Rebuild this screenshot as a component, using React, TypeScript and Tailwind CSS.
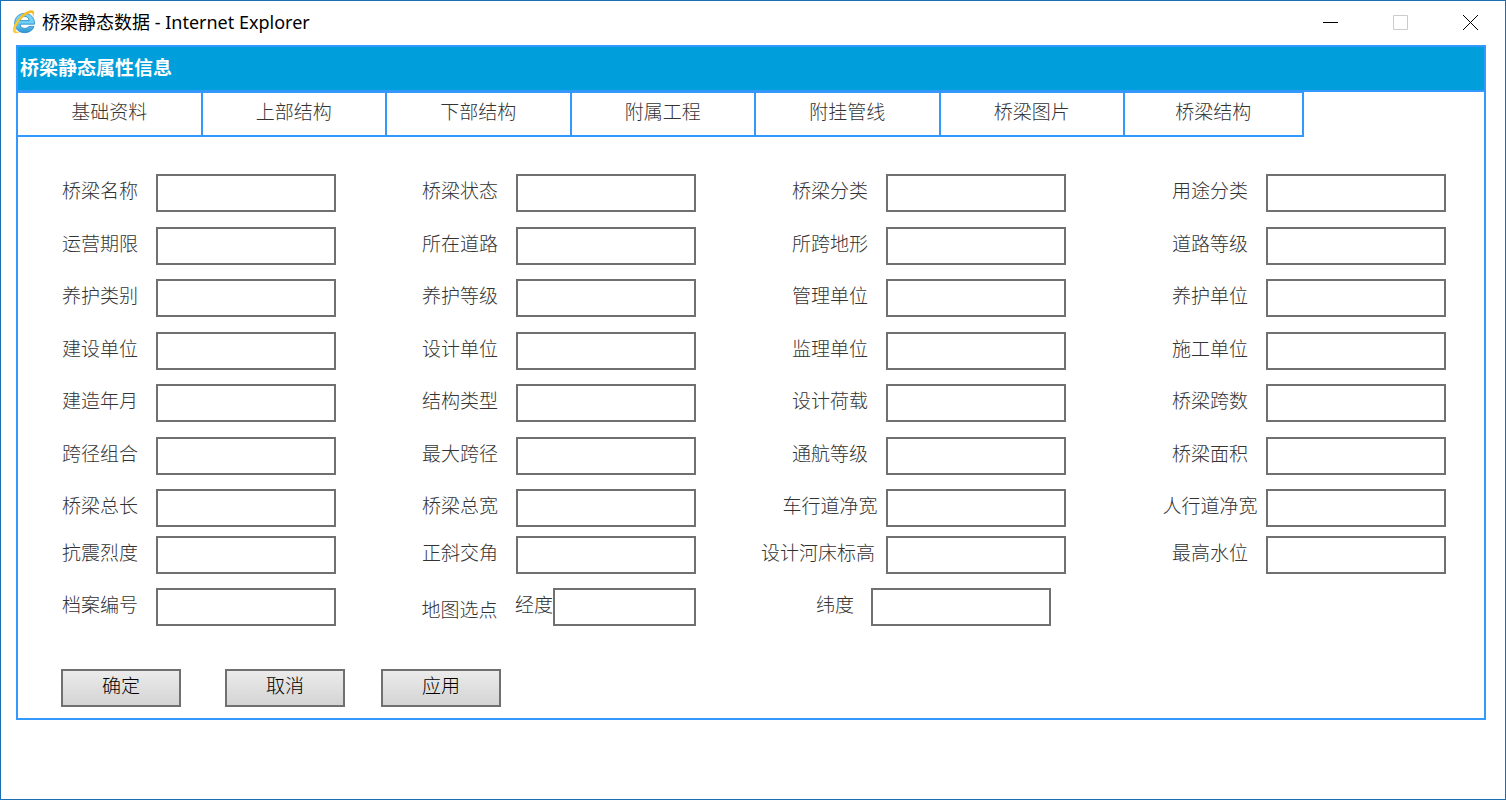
import { useState } from "react";
import clsx from "clsx";

type FieldDef = {
  name: string;
  label: string;
  labelClass?: string;
};

const TABS = ["基础资料", "上部结构", "下部结构", "附属工程", "附挂管线", "桥梁图片", "桥梁结构"];

const ROWS: FieldDef[][] = [
  [
    { name: "bridge_name", label: "桥梁名称" },
    { name: "bridge_status", label: "桥梁状态" },
    { name: "bridge_category", label: "桥梁分类" },
    { name: "usage_category", label: "用途分类" },
  ],
  [
    { name: "operation_period", label: "运营期限" },
    { name: "road", label: "所在道路" },
    { name: "terrain", label: "所跨地形" },
    { name: "road_grade", label: "道路等级" },
  ],
  [
    { name: "maintenance_type", label: "养护类别" },
    { name: "maintenance_grade", label: "养护等级" },
    { name: "management_unit", label: "管理单位" },
    { name: "maintenance_unit", label: "养护单位" },
  ],
  [
    { name: "owner_unit", label: "建设单位" },
    { name: "design_unit", label: "设计单位" },
    { name: "supervision_unit", label: "监理单位" },
    { name: "construction_unit", label: "施工单位" },
  ],
  [
    { name: "built_at", label: "建造年月" },
    { name: "structure_type", label: "结构类型" },
    { name: "design_load", label: "设计荷载" },
    { name: "span_count", label: "桥梁跨数" },
  ],
  [
    { name: "span_combination", label: "跨径组合" },
    { name: "max_span", label: "最大跨径" },
    { name: "navigation_grade", label: "通航等级" },
    { name: "bridge_area", label: "桥梁面积" },
  ],
  [
    { name: "total_length", label: "桥梁总长" },
    { name: "total_width", label: "桥梁总宽" },
    { name: "carriageway_width", label: "车行道净宽" },
    { name: "sidewalk_width", label: "人行道净宽" },
  ],
];

const SEISMIC_ROW: FieldDef[] = [
  { name: "seismic_intensity", label: "抗震烈度" },
  { name: "skew_angle", label: "正斜交角" },
  { name: "riverbed_elevation", label: "设计河床标高", labelClass: "-ml-6 w-[136px]" },
  { name: "highest_water_level", label: "最高水位" },
];

export default function App() {
  return (
    <div className="flex min-h-screen flex-col border border-[#1a6fb4] bg-white">
      <TitleBar />
      <main className="mr-[19px] ml-[15px] border-2 border-[#3399ff] font-['Noto_Sans_CJK_SC',sans-serif] text-[19px] leading-7 font-light text-[#333]">
        <h1 className="flex h-[45px] items-center border-b-2 border-[#3399ff] bg-[#009edb] px-0.5 pb-1 font-bold text-white">
          桥梁静态属性信息
        </h1>
        <TabStrip />
        <BridgeForm />
      </main>
    </div>
  );
}

function TitleBar() {
  return (
    <header className="flex h-11 items-center pb-0.5 pl-[11px] text-black">
      <IeLogo />
      <span className="ml-1.5 font-['Noto_Sans','Noto_Sans_CJK_SC',sans-serif] text-[18px] leading-6">
        桥梁静态数据 - Internet Explorer
      </span>
      <div className="ml-auto flex">
        <WindowButton label="最小化">
          <path d="M0 7.5h15" />
        </WindowButton>
        <WindowButton label="最大化" disabled>
          <path d="M.5.5h14v14H.5z" />
        </WindowButton>
        <WindowButton label="关闭">
          <path d="M0 0l15 15M15 0L0 15" />
        </WindowButton>
      </div>
    </header>
  );
}

function WindowButton({
  label,
  disabled,
  children,
}: {
  label: string;
  disabled?: boolean;
  children: React.ReactNode;
}) {
  return (
    <button
      type="button"
      aria-label={label}
      disabled={disabled}
      className="flex h-10 w-[70px] items-center justify-center text-black disabled:text-[#ccc]"
    >
      <svg viewBox="0 0 15 15" className="size-[15px]" fill="none" stroke="currentColor">
        {children}
      </svg>
    </button>
  );
}

function IeLogo() {
  return (
    <svg viewBox="0 0 24 24" className="size-6" aria-hidden="true">
      <defs>
        <linearGradient id="ie-blue" x1="0" y1="0" x2="0" y2="1">
          <stop offset="0" stopColor="#7fd3f5" />
          <stop offset=".5" stopColor="#6fd0f6" />
          <stop offset="1" stopColor="#2b93d1" />
        </linearGradient>
        <linearGradient id="ie-gold" x1="0" y1="1" x2="1" y2="0">
          <stop offset="0" stopColor="#ffd23a" />
          <stop offset="1" stopColor="#f5b81c" />
        </linearGradient>
      </defs>
      <path
        d="M22.500 14.200H8c.2 2.700 2.100 4.200 4.700 4.200 1.900 0 3.300-.7 4.100-2h5.200c-1.300 3.900-4.900 6.300-9.400 6.300-5.700 0-9.900-4-9.900-9.700 0-5.600 4.200-9.600 9.900-9.600 6.100 0 10.200 4.400 9.900 10.800zM8.100 10.600h9c-.3-2.600-2-4.200-4.400-4.200-2.500 0-4.200 1.600-4.600 4.200z"
        fill="url(#ie-blue)"
        stroke="#2585c4"
        strokeWidth=".8"
      />
      <path
        d="M21 6.800c1.200-2.900 1.300-4.900.1-5.700C18.600-.5 12.800 2 8.200 6.800 2.900 12.300-.2 19.200 1.700 22.100c1 1.400 3.200 1.200 6.100-.3-1.800.6-3.200.4-3.800-.6-1.400-2.300 1-7.900 5.600-12.700 4-4.100 8.700-6.700 10.500-5.500.9.600 1.100 1.900.9 3.800z"
        fill="url(#ie-gold)"
        stroke="#eba91a"
        strokeWidth=".3"
      />
    </svg>
  );
}

function TabStrip() {
  const [active, setActive] = useState(0);

  return (
    <div role="tablist" className="grid grid-cols-[repeat(6,369fr)_357fr_361fr]">
      {TABS.map((tab, i) => (
        <button
          key={tab}
          type="button"
          role="tab"
          aria-selected={i === active}
          onClick={() => setActive(i)}
          className="flex h-[45px] items-center justify-center border-t border-r-2 border-b-2 border-[#3399ff] pb-1.5"
        >
          {tab}
        </button>
      ))}
    </div>
  );
}

function BridgeForm() {
  return (
    <form className="pt-[37px] pb-[11px]" onSubmit={(e) => e.preventDefault()}>
      <div className="flex h-[353px] flex-col justify-between">
        {ROWS.map((fields) => (
          <FieldRow key={fields[0].name}>
            {fields.map((field) => (
              <Field key={field.name} {...field} />
            ))}
          </FieldRow>
        ))}
      </div>
      <div className="mt-[9px] grid gap-[14px]">
        <FieldRow>
          {SEISMIC_ROW.map((field) => (
            <Field key={field.name} {...field} />
          ))}
        </FieldRow>
        <FieldRow>
          <Field name="archive_no" label="档案编号" />
          <div className="flex" role="group" aria-labelledby="map-point">
            <span id="map-point" className="w-[111px] pt-[7px] text-center">
              地图选点
            </span>
            <Field name="longitude" label="经度" labelClass="w-[38px]" inputClass="w-[143px]" />
          </div>
          <div className="pl-[25px]">
            <Field name="latitude" label="纬度" labelClass="w-[72px]" />
          </div>
        </FieldRow>
      </div>
      <div className="mt-[43px] flex pl-[43px]">
        <FormButton type="submit">确定</FormButton>
        <FormButton className="ml-11">取消</FormButton>
        <FormButton className="ml-9">应用</FormButton>
      </div>
    </form>
  );
}

function FieldRow({ children }: { children: React.ReactNode }) {
  return <div className="grid grid-cols-[360fr_370fr_380fr_330fr] pl-[26px]">{children}</div>;
}

function Field({
  name,
  label,
  labelClass = "w-28",
  inputClass = "w-[180px]",
}: FieldDef & { inputClass?: string }) {
  return (
    <div className="flex">
      <label htmlFor={name} className={clsx("shrink-0 pt-0.5 text-center whitespace-nowrap", labelClass)}>
        {label}
      </label>
      <input
        id={name}
        name={name}
        type="text"
        className={clsx(
          "h-[38px] border-2 border-[#707070] bg-white px-1 outline-none focus:border-[#3399ff]",
          inputClass,
        )}
      />
    </div>
  );
}

function FormButton({
  type = "button",
  className,
  children,
}: {
  type?: "button" | "submit";
  className?: string;
  children: React.ReactNode;
}) {
  return (
    <button
      type={type}
      className={clsx(
        "flex h-[38px] w-[120px] items-center justify-center border-2 border-[#707070] bg-linear-to-b from-[#ebebeb] to-[#d4d4d4] pb-1.5 text-black",
        className,
      )}
    >
      {children}
    </button>
  );
}
